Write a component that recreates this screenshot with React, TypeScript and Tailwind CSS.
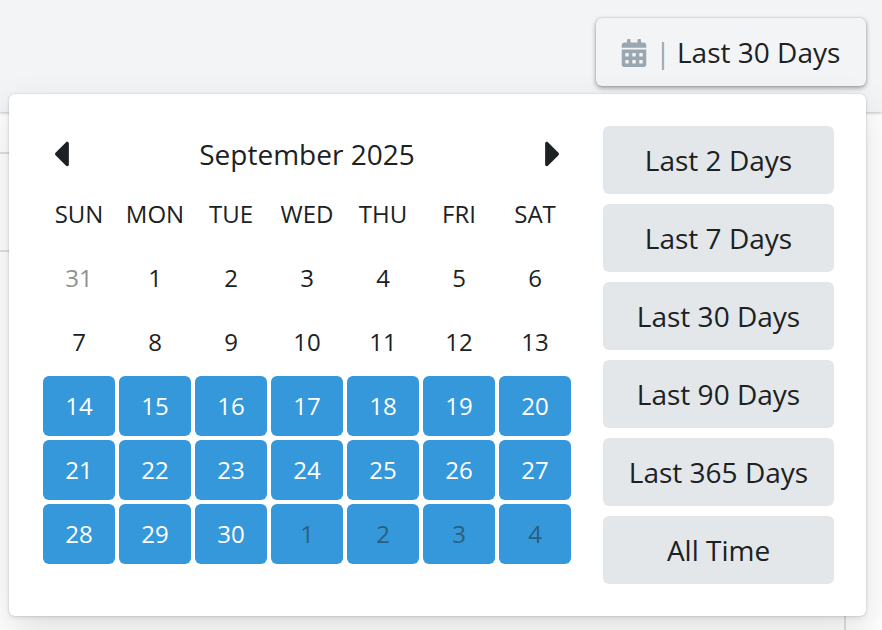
import { FaCalendarAlt, FaCaretLeft, FaCaretRight } from "react-icons/fa";

const weekdays = ["SUN", "MON", "TUE", "WED", "THU", "FRI", "SAT"];

type Day = { label: number; selected: boolean; outside: boolean };

// 31 August to 4 October 2025, five full weeks.
const days: Day[] = Array.from({ length: 35 }, (_, i) => ({
  label: i === 0 ? 31 : i > 30 ? i - 30 : i,
  selected: i >= 14,
  outside: i === 0 || i > 30,
}));

const weeks = [0, 1, 2, 3, 4].map((w) => days.slice(w * 7, w * 7 + 7));

const presets = [
  "Last 2 Days",
  "Last 7 Days",
  "Last 30 Days",
  "Last 90 Days",
  "Last 365 Days",
  "All Time",
];

function dayClass({ selected, outside }: Day) {
  if (selected && outside) return "bg-[#3598db] text-[#2a607f]";
  if (selected) return "bg-[#3598db] text-white";
  if (outside) return "text-[#8f9192]";
  return "text-[#1c2123]";
}

function Calendar() {
  return (
    <section aria-label="Calendar" className="min-w-0 flex-1">
      <div className="flex h-14 items-center justify-between px-2">
        <button type="button" aria-label="Previous month" className="flex w-6 justify-center">
          <FaCaretLeft className="h-[42px] w-4" />
        </button>
        <h2 className="text-[28px] leading-9">September 2025</h2>
        <button type="button" aria-label="Next month" className="flex w-6 justify-center">
          <FaCaretRight className="h-[42px] w-4" />
        </button>
      </div>
      <table className="w-full table-fixed border-separate border-spacing-0 text-2xl">
        <thead>
          <tr>
            {weekdays.map((d) => (
              <th key={d} scope="col" className="h-16 p-0 text-center font-normal">
                {d}
              </th>
            ))}
          </tr>
        </thead>
        <tbody>
          {weeks.map((week, w) => (
            <tr key={w}>
              {week.map((day) => (
                <td key={day.label} className="p-0.5">
                  <button
                    type="button"
                    aria-pressed={day.selected}
                    className={`block h-15 w-full rounded-md ${dayClass(day)}`}
                  >
                    {day.label}
                  </button>
                </td>
              ))}
            </tr>
          ))}
        </tbody>
      </table>
    </section>
  );
}

export default function App() {
  return (
    <div className="flex h-screen flex-col overflow-hidden bg-white font-['Open_Sans','Noto_Sans',sans-serif] text-[#1c2123]">
      <header className="relative z-10 flex h-28 shrink-0 justify-end bg-[#f3f4f6] px-4 pt-[18px] shadow-[0_1px_3px_rgba(0,0,0,0.25)]">
        <div className="relative h-[68px] w-full">
          <button
            type="button"
            aria-expanded="true"
            className="ml-auto flex h-full w-[270px] items-center rounded-md bg-[#f3f4f6] pl-[25px] text-[28px] shadow-[0_0_2px_rgba(0,0,0,0.2),0_2px_5px_rgba(0,0,0,0.35)]"
          >
            <FaCalendarAlt className="mt-0.5 h-7 w-[26px] text-[#9aa7b1]" />
            <span className="ml-2 w-4 text-center text-[#9aa7b1]">|</span>
            <span className="ml-1.5">Last 30 Days</span>
          </button>
          <div className="absolute top-full right-0 -left-[7px] mt-2 flex gap-[30px] rounded-md bg-white p-8 shadow-[0_0_2px_rgba(0,0,0,0.2),0_2px_4px_rgba(0,0,0,0.08),0_14px_36px_rgba(0,0,0,0.13)]">
            <Calendar />
            <div className="flex w-[231px] shrink-0 flex-col gap-2.5">
              {presets.map((p) => (
                <button
                  key={p}
                  type="button"
                  className="h-[68px] rounded-md bg-[#e3e7ea] text-[28px]"
                >
                  {p}
                </button>
              ))}
            </div>
          </div>
        </div>
      </header>
      <main className="flex min-h-0 flex-1 flex-col pt-10 pr-9">
        <div className="h-[100px] shrink-0 border-y-2 border-r-2 border-[#dce1e5]" />
        <div className="flex-1 border-r-2 border-[#dce1e5]" />
      </main>
    </div>
  );
}
